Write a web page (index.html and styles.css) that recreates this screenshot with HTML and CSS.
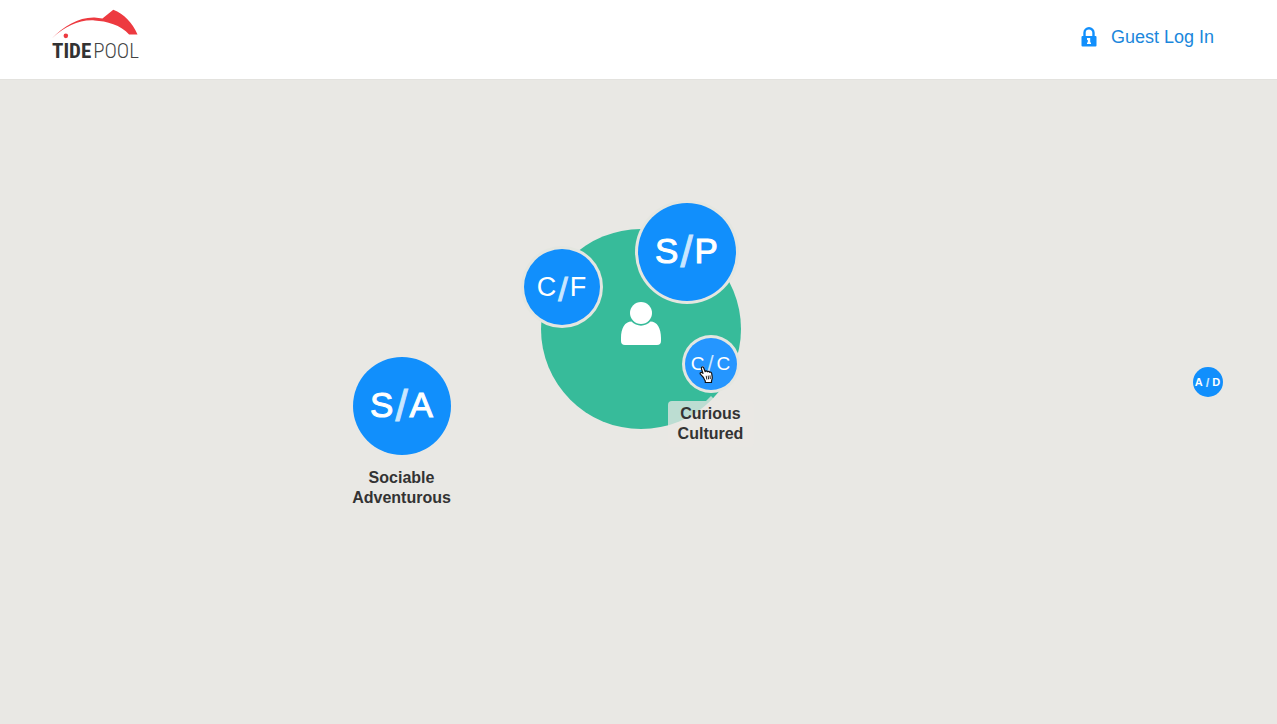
FILE: index.html
```html
<!DOCTYPE html>
<html lang="en">
<head>
<meta charset="utf-8">
<meta name="viewport" content="width=device-width, initial-scale=1">
<title>TidePool</title>
<link rel="stylesheet" href="styles.css">
</head>
<body>
<header class="header">
  <a class="logo" href="#" aria-label="TidePool">
    <svg class="logo-wave" viewBox="0 0 88 31" aria-hidden="true">
      <path d="M0 29.500C12 17 27 8 43 8.400L51 9.400 62 0.500C73 5 81 13 86.500 25.500H78C70 16 55 12 43 11.400 27 10.500 14 17 0 29.500Z" fill="#ed3a40"/>
      <circle cx="14" cy="27" r="2.300" fill="#ed3a40"/>
    </svg>
    <span class="logo-text"><b class="logo-tide">TIDE</b><span class="logo-pool">POOL</span></span>
  </a>
  <a class="login" href="#">
    <svg class="lock" viewBox="0 0 16 20" aria-hidden="true">
      <path d="M3.500 10V5.800a4.500 4.500 0 0 1 9 0V10" fill="none" stroke="#118ffc" stroke-width="2.400"/>
      <rect x="0.500" y="9" width="15" height="10.500" rx="1" fill="#118ffc"/>
      <path d="M6 11h3.200V15.500H10v1.500H6V15.500h.8v-2.500H6Z" fill="#fff"/>
    </svg>
    <span>Guest Log In</span>
  </a>
</header>
<main class="canvas">
  <div class="self">
    <svg class="person" viewBox="0 0 40 44" aria-label="You" role="img">
      <path d="M10.500 19.500C4 19.500 0 26 0 36v3q0 4 4 4h32q4 0 4-4v-3c0-10-4-16.500-10.500-16.500-5 5.500-14 5.500-19 0Z" fill="#fff"/>
      <circle cx="20" cy="11" r="11" fill="#fff"/>
    </svg>
  </div>
  <button class="bubble large ringed at-sp" type="button"><span>S</span><span class="slash">/</span><span>P</span></button>
  <button class="bubble medium ringed at-cf" type="button"><span>C</span><span class="slash">/</span><span>F</span></button>
  <div class="label tip">Curious<br>Cultured</div>
  <button class="bubble small ringed at-cc" type="button"><span>C</span><span class="slash">/</span><span>C</span></button>
  <button class="bubble large at-sa" type="button"><span>S</span><span class="slash">/</span><span>A</span></button>
  <div class="label label-sa">Sociable<br>Adventurous</div>
  <button class="bubble tiny at-ad" type="button"><span>A</span><span class="slash">/</span><span>D</span></button>
  <svg class="pointer" viewBox="0 0 14 18" aria-hidden="true">
    <path d="M4.500 11.500 1.600 8.400C.4 7 2 5.700 3.300 6.800L4 7.400 2.400 2.600C2 .9 4 .3 4.700 1.900L6.200 5.700C6.500 4.700 8 4.700 8.400 5.800 9 5 10.200 5.200 10.600 6.300 11.500 5.800 12.500 6.300 12.700 7.500L13.200 11C13.400 13 12.700 13.800 12.500 15.200V16.500H6.300V15C5.400 14 5 12.500 4.500 11.500Z" fill="#fff" stroke="#111" stroke-width="1.200" stroke-linejoin="round"/>
    <path d="M7.200 9.800 7.800 13.500M9.200 9.600 9.600 13.300M11 9.400 11.300 13" stroke="#111" stroke-width="0.900"/>
  </svg>
</main>
</body>
</html>
```
FILE: styles.css
```css
* { box-sizing: border-box; }

body {
  margin: 0;
  min-height: 100vh;
  display: flex;
  flex-direction: column;
  background: #e9e8e4;
  color: #333;
  font-family: "Liberation Sans", Arial, sans-serif;
}

.header {
  display: flex;
  justify-content: space-between;
  align-items: flex-start;
  padding: 9px 63px 16px 52px;
  border-bottom: 1px solid #e3e2de;
  background: #fff;
}

.logo {
  display: flex;
  flex-direction: column;
  color: #333;
  text-decoration: none;
}
.logo-wave { width: 87px; height: 31px; }
.logo-text {
  display: flex;
  justify-content: space-between;
  font-family: "Roboto Condensed", "Open Sans Condensed", sans-serif;
  font-size: 21px;
  line-height: 23px;
}
.logo-tide { font-weight: 700; }
.logo-pool { color: #444; font-weight: 300; }

.login {
  display: flex;
  align-items: center;
  gap: 14px;
  margin-top: 18px;
  color: #1b87dc;
  font-size: 18px;
  line-height: 20px;
  text-decoration: none;
}
.lock { width: 16px; height: 20px; }

/* Free canvas: items are placed by centre, relative to the middle of the page. */
.canvas {
  position: relative;
  flex: 1;
  min-height: 480px;
  overflow: hidden;
}

.self, .bubble, .label, .pointer { position: absolute; }

.self {
  top: 149px;
  left: calc(50% + 2px);
  width: 200px;
  height: 200px;
  display: flex;
  justify-content: center;
  padding-top: 73px;
  border-radius: 50%;
  background: #37bb9a;
  transform: translateX(-50%);
}
.person { width: 40px; height: 44px; }

.bubble {
  display: flex;
  align-items: center;
  justify-content: center;
  padding: 0;
  border: 0;
  border-radius: 50%;
  background: #118ffc;
  color: #fff;
  font-family: inherit;
  line-height: 1;
  cursor: pointer;
  transform: translate(-50%, -50%);
}
.ringed { box-shadow: 0 0 0 3px #e4e6e0; }
.slash { padding-top: 4px; color: #c9e6ff; }

.large { width: 98px; height: 98px; gap: 2px; padding-bottom: 4px; font-size: 35px; -webkit-text-stroke: 1px; }
.large .slash { font-size: 44px; }
.medium { width: 76px; height: 76px; gap: 2px; font-size: 27px; }
.medium .slash { font-size: 34px; -webkit-text-stroke: 1px; }
.small { width: 52px; height: 52px; gap: 3px; padding-bottom: 2px; background: #2596ff; font-size: 19px; }
.small .slash { padding-top: 2px; font-size: 22px; }
.tiny { width: 30px; height: 30px; gap: 3px; font-size: 11px; font-weight: 700; }
.tiny .slash { padding-top: 0; font-size: 13px; }

.at-sp { top: 172px; left: calc(50% + 48px); }
.at-cf { top: 207px; left: calc(50% - 77px); }
.at-cc { top: 284px; left: calc(50% + 72px); }
.at-sa { top: 326px; left: calc(50% - 237px); }
.at-ad { top: 302px; left: calc(50% + 569px); }

.label {
  padding: 3px 10px;
  font-size: 16px;
  font-weight: 700;
  line-height: 20px;
  text-align: center;
  transform: translateX(-50%);
}
.label-sa { top: 385px; left: calc(50% - 237px); }
.tip {
  top: 321px;
  left: calc(50% + 72px);
  width: 86px;
  border-radius: 4px;
  background: rgba(233, 232, 228, 0.75);
}
.tip::before {
  content: "";
  position: absolute;
  bottom: 100%;
  left: 50%;
  margin-left: -5px;
  border: 5px solid transparent;
  border-top: 0;
  border-bottom-color: rgba(233, 232, 228, 0.75);
}

.pointer {
  top: 286px;
  left: calc(50% + 60px);
  width: 14px;
  height: 18px;
  pointer-events: none;
}
```
